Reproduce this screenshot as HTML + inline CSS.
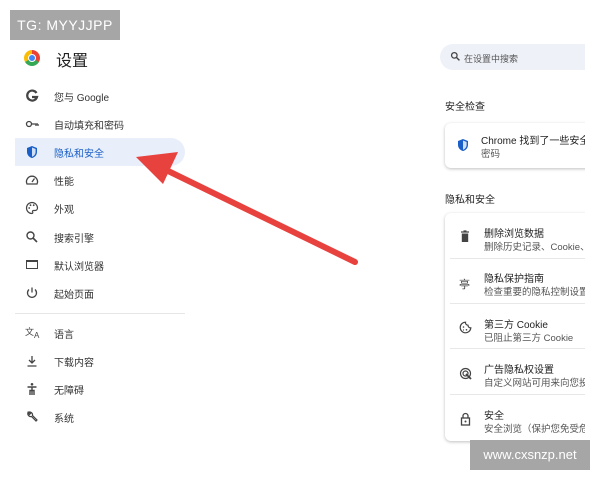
<!DOCTYPE html>
<html><head><meta charset="utf-8"><style>
*{margin:0;padding:0;box-sizing:border-box}
body{width:600px;height:480px;background:#fff;position:relative;overflow:hidden;font-family:"Liberation Sans","Noto Sans CJK SC",sans-serif;color:#1f1f1f}
.a{position:absolute;white-space:nowrap}
.nav{font-size:10px;color:#333;left:54px}
.ic{position:absolute;left:25px}
.t{font-size:10px;color:#222}
.s{font-size:9.5px;color:#555}
.clip{position:absolute;left:0;top:0;width:585px;height:480px;overflow:hidden}
</style></head><body>
<div class="a" style="left:10px;top:10px;width:110px;height:30px;background:#a6a6a6;color:#fff;font-size:14px;line-height:30px;text-align:center;letter-spacing:0.5px">TG: MYYJJPP</div>
<div class="a" style="left:24px;top:50px;width:16px;height:16px;border-radius:50%;background:conic-gradient(#ea4335 0 120deg,#34a853 120deg 240deg,#fbbc05 240deg)"></div>
<div class="a" style="left:28px;top:54px;width:8px;height:8px;border-radius:50%;background:#4285f4;border:1.5px solid #fff"></div>
<div class="a" style="left:56px;top:47px;font-size:16px">设置</div>

<div class="a" style="left:15px;top:138px;width:170px;height:28px;background:#e8effb;border-radius:0 14px 14px 0"></div>

<svg class="ic" style="top:89px" width="14" height="14" viewBox="0 0 14 14"><path d="M11.5 4A5 5 0 1 0 12 8H7" fill="none" stroke="#444" stroke-width="2.2"/></svg>
<div class="a nav" style="top:89px">您与 Google</div>
<svg class="ic" style="top:117px" width="14" height="14" viewBox="0 0 14 14"><circle cx="4" cy="7" r="2.5" fill="none" stroke="#444" stroke-width="1.3"/><path d="M6.5 7H13M11 7v2M13 7v2" fill="none" stroke="#444" stroke-width="1.3"/></svg>
<div class="a nav" style="top:117px">自动填充和密码</div>
<svg class="a" style="left:26px;top:145px" width="12" height="14" viewBox="0 0 12 14"><path d="M6 1L1 3v4c0 3 2.5 5.5 5 6 2.5-.5 5-3 5-6V3z" fill="#1a5fc7"/><path d="M6 2.5v9.3c1.8-.6 3.6-2.5 3.6-4.8V4z" fill="#fff" opacity=".8"/></svg>
<div class="a nav" style="top:145px;color:#1a5fc7">隐私和安全</div>
<svg class="ic" style="top:173px" width="14" height="14" viewBox="0 0 14 14"><path d="M2 11A5.5 5.5 0 1 1 12 11Z" fill="none" stroke="#444" stroke-width="1.3"/><path d="M7 9L9.5 5.5" stroke="#444" stroke-width="1.3"/></svg>
<div class="a nav" style="top:173px">性能</div>
<svg class="ic" style="top:201px" width="14" height="14" viewBox="0 0 14 14"><path d="M7 1.5a5.5 5.5 0 1 0 0 11c1 0 1-1 .6-1.6-.4-.6 0-1.4.8-1.4H10a2.5 2.5 0 0 0 2.5-2.5C12.5 4 10 1.5 7 1.5z" fill="none" stroke="#444" stroke-width="1.2"/><circle cx="4.2" cy="7" r=".9" fill="#444"/><circle cx="5.5" cy="4.2" r=".9" fill="#444"/><circle cx="8.7" cy="4.2" r=".9" fill="#444"/></svg>
<div class="a nav" style="top:201px">外观</div>
<svg class="ic" style="top:230px" width="14" height="14" viewBox="0 0 14 14"><circle cx="5.5" cy="5.5" r="3.5" fill="none" stroke="#444" stroke-width="1.4"/><path d="M8 8l4 4" stroke="#444" stroke-width="1.6"/></svg>
<div class="a nav" style="top:230px">搜索引擎</div>
<div class="a" style="left:26px;top:260px;width:12px;height:9px;border:1.5px solid #444;border-top-width:2.5px"></div><div class="a nav" style="top:258px">默认浏览器</div>
<svg class="ic" style="top:286px" width="14" height="14" viewBox="0 0 14 14"><path d="M4 3.5a4.5 4.5 0 1 0 6 0M7 1.5v5" fill="none" stroke="#444" stroke-width="1.3"/></svg>
<div class="a nav" style="top:286px">起始页面</div>
<div class="a" style="left:15px;top:313px;width:170px;height:1px;background:#e6e6e6"></div>
<div class="a" style="left:25px;top:325px;font-size:9px;color:#444">文<span style="font-size:8px;position:relative;top:3px">A</span></div><div class="a nav" style="top:326px">语言</div>
<svg class="ic" style="top:354px" width="14" height="14" viewBox="0 0 14 14"><path d="M7 2v7M4 6l3 3 3-3M2.5 12h9" fill="none" stroke="#444" stroke-width="1.3"/></svg>
<div class="a nav" style="top:354px">下载内容</div>
<svg class="ic" style="top:382px" width="14" height="14" viewBox="0 0 14 14"><circle cx="7" cy="2.3" r="1.3" fill="#444"/><path d="M2.5 5h9M7 5v8M5 13V8.5h4V13" fill="none" stroke="#444" stroke-width="1.4"/></svg>
<div class="a nav" style="top:382px">无障碍</div>
<svg class="ic" style="top:410px" width="14" height="14" viewBox="0 0 14 14"><path d="M3 2.5a3 3 0 0 0 3.5 4L11 11l1-1-4.5-4.5A3 3 0 0 0 4 2l1.5 1.5-1 1z" fill="none" stroke="#444" stroke-width="1.2"/></svg>
<div class="a nav" style="top:410px">系统</div>

<div class="clip">
<div class="a" style="left:440px;top:44px;width:160px;height:26px;background:#eef1f8;border-radius:13px 0 0 13px"></div>
<svg class="a" style="left:450px;top:51px" width="11" height="11" viewBox="0 0 14 14"><circle cx="5.5" cy="5.5" r="3.5" fill="none" stroke="#444" stroke-width="1.6"/><path d="M8 8l4 4" stroke="#444" stroke-width="1.8"/></svg>
<div class="a s" style="left:464px;top:52px;font-size:9px;color:#555">在设置中搜索</div>

<div class="a t" style="left:445px;top:98px">安全检查</div>
<div class="a" style="left:445px;top:123px;width:160px;height:45px;border-radius:6px;box-shadow:0 1px 3px rgba(0,0,0,.25);background:#fff"></div>
<svg class="a" style="left:457px;top:138px" width="12" height="14" viewBox="0 0 12 14"><path d="M6 1L1 3v4c0 3 2.5 5.5 5 6 2.5-.5 5-3 5-6V3z" fill="#1a5fc7"/><path d="M6 2.5v9.3c1.8-.6 3.6-2.5 3.6-4.8V4z" fill="#fff" opacity=".8"/></svg>
<div class="a t" style="left:481px;top:132px">Chrome 找到了一些安全建议</div>
<div class="a s" style="left:481px;top:146px">密码</div>

<div class="a t" style="left:445px;top:191px">隐私和安全</div>
<div class="a" style="left:445px;top:213px;width:160px;height:228px;border-radius:6px;box-shadow:0 1px 3px rgba(0,0,0,.25);background:#fff"></div>
<div class="a" style="left:450px;top:258px;width:145px;height:1px;background:#e8e8e8"></div>
<div class="a" style="left:450px;top:303px;width:145px;height:1px;background:#e8e8e8"></div>
<div class="a" style="left:450px;top:348px;width:145px;height:1px;background:#e8e8e8"></div>
<div class="a" style="left:450px;top:394px;width:145px;height:1px;background:#e8e8e8"></div>

<svg class="a" style="left:459px;top:230px" width="12" height="13" viewBox="0 0 12 13"><path d="M2 2h8M4.5 1h3" stroke="#444" stroke-width="1.3"/><path d="M2.8 3.5h6.4v8.5H2.8z" fill="#444"/></svg>
<div class="a t" style="left:484px;top:225px">删除浏览数据</div><div class="a s" style="left:484px;top:239px">删除历史记录、Cookie、缓存</div>
<div class="a" style="left:459px;top:276px;font-size:11px;color:#444">亭</div>
<div class="a t" style="left:484px;top:270px">隐私保护指南</div><div class="a s" style="left:484px;top:284px">检查重要的隐私控制设置</div>
<svg class="a" style="left:459px;top:321px" width="13" height="13" viewBox="0 0 13 13"><path d="M6.5 1.2a5.3 5.3 0 1 0 5.3 5.6A2.5 2.5 0 0 1 9 4.2 2.5 2.5 0 0 1 6.5 1.2z" fill="none" stroke="#444" stroke-width="1.2"/><circle cx="4.5" cy="6" r=".8" fill="#444"/><circle cx="7.5" cy="8.8" r=".8" fill="#444"/><circle cx="4.5" cy="9" r=".6" fill="#444"/></svg>
<div class="a t" style="left:484px;top:316px">第三方 Cookie</div><div class="a s" style="left:484px;top:330px">已阻止第三方 Cookie</div>
<svg class="a" style="left:459px;top:367px" width="13" height="13" viewBox="0 0 13 13"><circle cx="6.5" cy="6.5" r="5" fill="none" stroke="#444" stroke-width="1.2"/><circle cx="6.5" cy="6.5" r="2.5" fill="none" stroke="#444" stroke-width="1.2"/><path d="M7 7l5 5" stroke="#444" stroke-width="1.8"/></svg>
<div class="a t" style="left:484px;top:361px">广告隐私权设置</div><div class="a s" style="left:484px;top:375px">自定义网站可用来向您投放广告</div>
<svg class="a" style="left:460px;top:412px" width="11" height="14" viewBox="0 0 11 14"><path d="M3 6V4a2.5 2.5 0 0 1 5 0v2" fill="none" stroke="#444" stroke-width="1.3"/><rect x="1.5" y="6" width="8" height="7" fill="none" stroke="#444" stroke-width="1.3"/><circle cx="5.5" cy="9.5" r="1" fill="#444"/></svg>
<div class="a t" style="left:484px;top:407px">安全</div><div class="a s" style="left:484px;top:421px">安全浏览（保护您免受危险网站）</div>
</div>

<div class="a" style="left:470px;top:440px;width:120px;height:30px;background:#a6a6a6;color:#fff;font-size:13px;line-height:30px;text-align:center">www.cxsnzp.net</div>

<svg class="a" style="left:0;top:0" width="600" height="480"><line x1="355" y1="262" x2="162" y2="168" stroke="#e8423f" stroke-width="6" stroke-linecap="round"/><polygon points="136,157 178,152 163,184" fill="#e8423f"/></svg>
</body></html>
